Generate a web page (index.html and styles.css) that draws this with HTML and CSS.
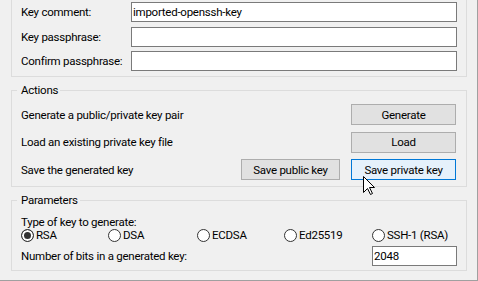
FILE: index.html
```html
<!DOCTYPE html>
<html lang="en">
<head>
    <meta charset="UTF-8">
    <title>PuTTY Key Generator</title>
    <link rel="stylesheet" href="styles.css">
</head>
<body>
    <div class="window">
        <!-- key details (top of the box is scrolled off) -->
        <div class="group key-group">
            <div class="field-row">
                <label for="comment">Key comment:</label>
                <input type="text" class="text-input" id="comment" value="imported-openssh-key">
            </div>
            <div class="field-row">
                <label for="pass">Key passphrase:</label>
                <input type="password" class="text-input" id="pass">
            </div>
            <div class="field-row">
                <label for="pass2">Confirm passphrase:</label>
                <input type="password" class="text-input" id="pass2">
            </div>
        </div>

        <fieldset class="group actions">
            <legend>Actions</legend>
            <div class="action-row">
                <span>Generate a public/private key pair</span>
                <button class="btn">Generate</button>
            </div>
            <div class="action-row">
                <span>Load an existing private key file</span>
                <button class="btn">Load</button>
            </div>
            <div class="action-row">
                <span>Save the generated key</span>
                <div class="btn-pair">
                    <button class="btn btn-pub">Save public key</button>
                    <button class="btn hover">Save private key</button>
                </div>
            </div>
        </fieldset>

        <fieldset class="group params">
            <legend>Parameters</legend>
            <div class="type-label">Type of key to generate:</div>
            <div class="radio-row">
                <label class="radio"><input type="radio" name="keytype" checked>RSA</label>
                <label class="radio"><input type="radio" name="keytype">DSA</label>
                <label class="radio"><input type="radio" name="keytype">ECDSA</label>
                <label class="radio"><input type="radio" name="keytype">Ed25519</label>
                <label class="radio"><input type="radio" name="keytype">SSH-1 (RSA)</label>
            </div>
            <div class="bits-row">
                <label for="bits">Number of bits in a generated key:</label>
                <input type="text" class="text-input bits" id="bits" value="2048">
            </div>
        </fieldset>

        <svg class="cursor" width="13" height="20" viewBox="0 0 13 20">
            <path d="M0.5 0.5 L0.5 16.5 L4.5 12.5 L7.5 18.5 L9.5 17.5 L6.5 11.5 L11.5 11.5 Z" fill="#fff" stroke="#000" stroke-width="1" stroke-linejoin="miter"/>
        </svg>
    </div>
</body>
</html>
```

FILE: styles.css
```css
* { margin: 0; padding: 0; box-sizing: border-box; }

body {
    background: #f0f0f0;
    font-family: Roboto, 'Liberation Sans', sans-serif;
    font-size: 11.5px;
    letter-spacing: -0.25px;
    color: #000;
}

.window {
    position: relative;
    width: 478px;
    height: 281px;
    padding: 0 10px 0 11px;
    border-right: 1px solid #a0a0a0;
    border-bottom: 1px solid #a0a0a0;
    white-space: nowrap;
}

.group {
    border: 1px solid #dcdcdc;
}

fieldset.group legend {
    line-height: 15px;
    margin-left: -4px;
    padding: 0 2px 0 4px;
}

/* key details */
.key-group {
    border-top: none;
    padding: 2px 9px 5px;
    display: flex;
    flex-direction: column;
    gap: 4.5px;
}

.field-row {
    display: grid;
    grid-template-columns: 110px 1fr;
    align-items: center;
    height: 20px;
}

.text-input {
    height: 20px;
    width: 100%;
    border: 1px solid #7a7a7a;
    background: #fff;
    font: inherit;
    letter-spacing: inherit;
    color: #000;
    padding: 0 1px;
    outline: none;
}

/* actions */
.actions {
    margin-top: 6px;
    padding: 6px 10px 6px 9px;
    display: flex;
    flex-direction: column;
    gap: 6.5px;
}

.action-row {
    display: flex;
    align-items: center;
    justify-content: space-between;
    height: 21px;
}

.btn-pair {
    display: flex;
    gap: 11px;
}

.btn {
    width: 105px;
    height: 21px;
    border: 1px solid #adadad;
    background: #e1e1e1;
    font: inherit;
    letter-spacing: inherit;
    color: #000;
}

.btn-pub { width: 99px; }

.btn.hover {
    background: #e5f1fb;
    border-color: #0078d7;
}

/* parameters */
.params {
    margin-top: 6px;
    padding: 7px 9px 4px 9px;
}

.type-label { line-height: 14px; }

.radio-row {
    display: grid;
    grid-template-columns: 87px 89px 87px 88px 1fr;
    height: 13px;
    margin-bottom: 4px;
}

.radio {
    display: flex;
    align-items: center;
    gap: 2px;
    line-height: 13px;
}

.radio input {
    appearance: none;
    width: 13px;
    height: 13px;
    border: 1px solid #333;
    border-radius: 50%;
    background: #fff;
}

.radio input:checked {
    background: #333;
    box-shadow: inset 0 0 0 2px #fff;
}

.bits-row {
    display: flex;
    align-items: center;
    justify-content: space-between;
}

.text-input.bits { width: 85px; }

.cursor {
    position: absolute;
    left: 363px;
    top: 176px;
}
```
